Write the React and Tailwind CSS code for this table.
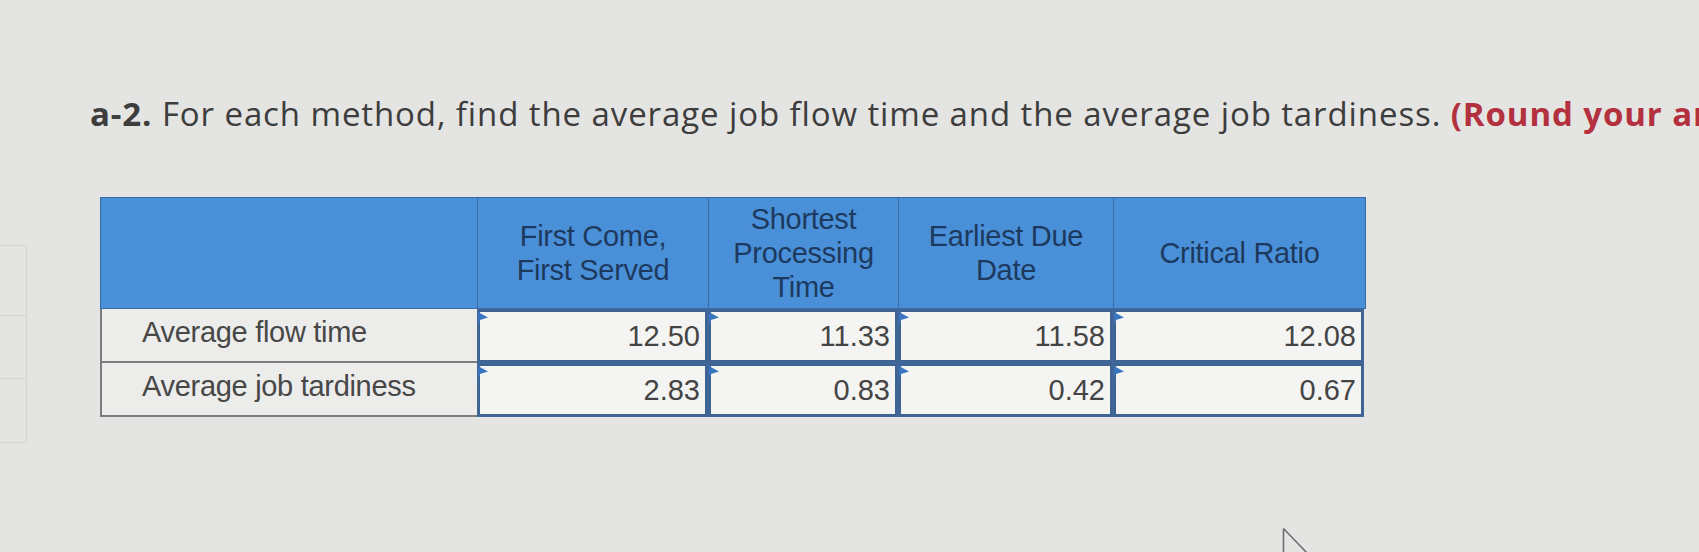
import React from "react";

const cols = [
  { w: "w-[231px]", head: ["First Come,", "First Served"], v: ["12.50", "2.83"] },
  { w: "w-[190px]", head: ["Shortest", "Processing", "Time"], v: ["11.33", "0.83"] },
  { w: "w-[215px]", head: ["Earliest Due", "Date"], v: ["11.58", "0.42"] },
  { w: "w-[251px]", head: ["Critical Ratio"], v: ["12.08", "0.67"] },
];

function Flag() {
  return (
    <svg className="absolute left-[-2px] top-[0px]" width="10" height="13" viewBox="0 0 10 13">
      <polygon points="0,0 10,5.5 2,8 0,13" fill="#3a76c0" />
    </svg>
  );
}

function DataCell({ value, w }) {
  return (
    <div className={`${w} h-[54px] p-[1px] bg-[#41679a]`}>
      <div className="relative h-full border-[2px] border-[#3e6494] bg-[#f4f4f3] flex items-center justify-end pr-[5px] text-[29px] text-[#444]">
        <Flag />
        <span className="leading-none">{value}</span>
      </div>
    </div>
  );
}

export default function App() {
  const font = { fontFamily: '"Liberation Sans", Arial, sans-serif' };
  return (
    <div className="relative w-[1699px] h-[552px] overflow-hidden bg-[#e4e4e2]">
      <div
        className="pt-[94px] pl-[90px] whitespace-nowrap text-[33px] leading-[40px] text-[#3d3d3d] tracking-[0.9px]"
        style={{ fontFamily: '"Open Sans", "Noto Sans", sans-serif' }}
      >
        <span className="font-bold">a-2.</span> For each method, find the average job flow time and the average job tardiness.{" "}
        <span className="font-bold text-[#b3303f]">(Round your answers to 2 decimal places.)</span>
      </div>

      <div className="ml-[100px] mt-[63px] flex flex-col w-fit" style={font}>
        <div className="flex h-[112px] bg-[#4a90d9] border border-[#3a6ca6]">
          <div className="w-[377px] border-r border-[#3a6ca6]" />
          {cols.map((c, i) => (
            <div
              key={i}
              className={`${c.w} ${i < 3 ? "border-r border-[#3a6ca6]" : ""} flex flex-col items-center justify-center text-[29px] leading-[34px] text-[#1d3a5e] tracking-[-0.3px]`}
            >
              {c.head.map((h) => (
                <span key={h}>{h}</span>
              ))}
            </div>
          ))}
        </div>
        {["Average flow time", "Average job tardiness"].map((label, r) => (
          <div key={label} className="flex">
            <div className="w-[377px] h-[54px] bg-[#ececeb] border-l-[2px] border-b-[2px] border-[#7c7c7c] flex items-center pl-[40px] pb-[4px] text-[29px] text-[#474747] tracking-[-0.3px]">
              {label}
            </div>
            {cols.map((c, i) => (
              <DataCell key={i} w={c.w} value={c.v[r]} />
            ))}
          </div>
        ))}
      </div>

      <div className="absolute left-0 top-[245px] w-[27px] h-[198px] border border-l-0 border-[#d3d3d1] rounded-r-[3px] flex flex-col">
        <div className="h-[70px] border-b border-[#d3d3d1]" />
        <div className="h-[63px] border-b border-[#d3d3d1]" />
      </div>

      <svg className="absolute left-[1282px] top-[527px]" width="30" height="30" viewBox="0 0 30 30">
        <path d="M1.5 1.5 L1.5 29 M1.5 1.5 L25 26" stroke="#6f6f6f" strokeWidth="1.6" fill="none" />
      </svg>
    </div>
  );
}
